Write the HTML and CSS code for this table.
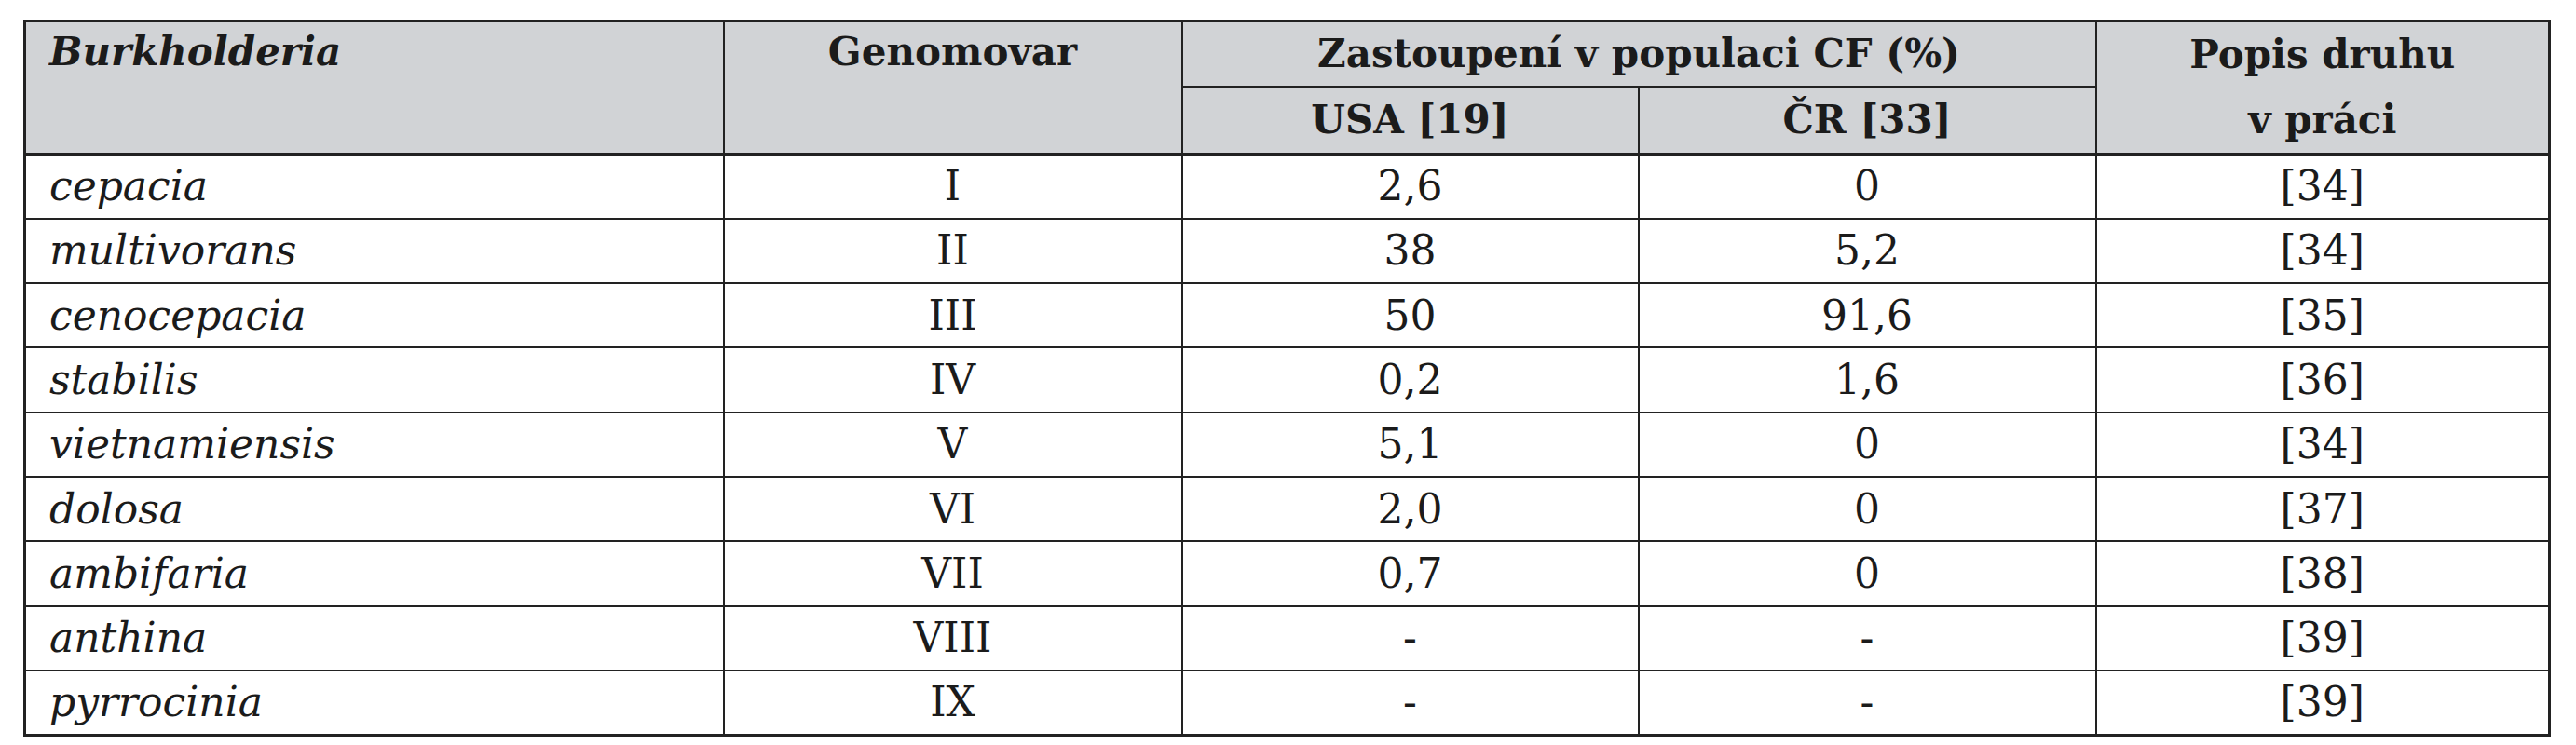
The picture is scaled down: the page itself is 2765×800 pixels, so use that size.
FILE: index.html
```html
<!DOCTYPE html>
<html lang="cs">
<head>
<meta charset="utf-8">
<title>Burkholderia</title>
<link rel="stylesheet" href="styles.css">
</head>
<body>
<table class="tbl">
  <colgroup>
    <col class="c1"><col class="c2"><col class="c3"><col class="c4"><col class="c5">
  </colgroup>
  <thead>
    <tr class="h1">
      <th rowspan="2" class="name top"><em>Burkholderia</em></th>
      <th rowspan="2" class="top">Genomovar</th>
      <th colspan="2">Zastoupení v populaci CF (%)</th>
      <th rowspan="2" class="popis">Popis druhu<br>v práci</th>
    </tr>
    <tr class="h2">
      <th>USA [19]</th>
      <th>ČR [33]</th>
    </tr>
  </thead>
  <tbody>
    <tr><td class="name">cepacia</td><td>I</td><td>2,6</td><td>0</td><td>[34]</td></tr>
    <tr><td class="name">multivorans</td><td>II</td><td>38</td><td>5,2</td><td>[34]</td></tr>
    <tr><td class="name">cenocepacia</td><td>III</td><td>50</td><td>91,6</td><td>[35]</td></tr>
    <tr><td class="name">stabilis</td><td>IV</td><td>0,2</td><td>1,6</td><td>[36]</td></tr>
    <tr><td class="name">vietnamiensis</td><td>V</td><td>5,1</td><td>0</td><td>[34]</td></tr>
    <tr><td class="name">dolosa</td><td>VI</td><td>2,0</td><td>0</td><td>[37]</td></tr>
    <tr><td class="name">ambifaria</td><td>VII</td><td>0,7</td><td>0</td><td>[38]</td></tr>
    <tr><td class="name">anthina</td><td>VIII</td><td>-</td><td>-</td><td>[39]</td></tr>
    <tr><td class="name">pyrrocinia</td><td>IX</td><td>-</td><td>-</td><td>[39]</td></tr>
  </tbody>
</table>
</body>
</html>
```
FILE: styles.css
```css
html, body {
  margin: 0;
  padding: 0;
  background: #ffffff;
}
body {
  padding: 21px 0 0 25px;
  font-family: "DejaVu Serif", "Liberation Serif", serif;
  color: #1b1b1b;
}
.tbl {
  border-collapse: collapse;
  table-layout: fixed;
  width: 2710px;
  border: 3px solid #222;
  font-size: 44px;
}
.c1 { width: 750px; }
.c2 { width: 492px; }
.c3 { width: 490px; }
.c4 { width: 491px; }
.c5 { width: 487px; }
.tbl th, .tbl td {
  border: 2px solid #222;
  padding: 0;
  text-align: center;
  vertical-align: middle;
  line-height: 56px;
}
.tbl thead th {
  background: #d1d3d6;
  font-weight: bold;
  font-size: 42px;
}
.tbl thead tr.h2 th {
  border-bottom: 3px solid #222;
}
.tbl thead th[rowspan] {
  border-bottom: 3px solid #222;
}
.h1 { height: 67px; }
.h2 { height: 69px; }
.tbl tbody tr { height: 69.3px; }
.tbl th.top {
  vertical-align: top;
  padding-top: 4px;
}
.tbl .name {
  text-align: left;
  padding-left: 25px;
  font-style: italic;
}
.tbl th.name em { font-style: italic; }
.tbl th.popis {
  line-height: 70px;
}
```
